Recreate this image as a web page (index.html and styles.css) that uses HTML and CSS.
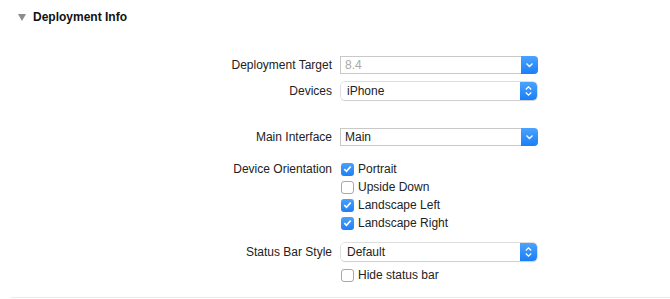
FILE: index.html
```html
<!DOCTYPE html>
<html lang="en">
<head>
  <meta charset="UTF-8" />
  <title>Deployment Info</title>
  <link rel="stylesheet" href="styles.css">
</head>
<body>
  <div class="section">
    <div class="section-head">
      <span class="disclosure"></span>
      <span class="section-title">Deployment Info</span>
    </div>

    <div class="form">
      <div class="row">
        <div class="label">Deployment Target</div>
        <div class="combo">
          <div class="combo-field disabled">8.4</div>
          <div class="combo-btn">
            <svg width="9" height="6" viewBox="0 0 9 6"><path d="M1.5 1.5 L4.5 4.5 L7.5 1.5" fill="none" stroke="#fff" stroke-width="1.4"/></svg>
          </div>
        </div>
      </div>

      <div class="row">
        <div class="label">Devices</div>
        <div class="popup">
          <div class="popup-field">iPhone</div>
          <div class="popup-btn">
            <svg width="9" height="12" viewBox="0 0 9 12"><path d="M1.8 4.5 L4.5 1.8 L7.2 4.5 M1.8 7.5 L4.5 10.2 L7.2 7.5" fill="none" stroke="#fff" stroke-width="1.3"/></svg>
          </div>
        </div>
      </div>

      <div class="row gap-lg">
        <div class="label">Main Interface</div>
        <div class="combo">
          <div class="combo-field">Main</div>
          <div class="combo-btn">
            <svg width="9" height="6" viewBox="0 0 9 6"><path d="M1.5 1.5 L4.5 4.5 L7.5 1.5" fill="none" stroke="#fff" stroke-width="1.4"/></svg>
          </div>
        </div>
      </div>

      <div class="group gap-md">
        <div class="label check-label">Device Orientation</div>
        <div class="checks">
          <label class="check"><span class="box on"><svg width="9" height="8" viewBox="0 0 9 8"><path d="M1.3 4.2 L3.5 6.3 L7.7 1.5" fill="none" stroke="#fff" stroke-width="1.7"/></svg></span>Portrait</label>
          <label class="check"><span class="box"></span>Upside Down</label>
          <label class="check"><span class="box on"><svg width="9" height="8" viewBox="0 0 9 8"><path d="M1.3 4.2 L3.5 6.3 L7.7 1.5" fill="none" stroke="#fff" stroke-width="1.7"/></svg></span>Landscape Left</label>
          <label class="check"><span class="box on"><svg width="9" height="8" viewBox="0 0 9 8"><path d="M1.3 4.2 L3.5 6.3 L7.7 1.5" fill="none" stroke="#fff" stroke-width="1.7"/></svg></span>Landscape Right</label>
        </div>
      </div>

      <div class="row gap-sm">
        <div class="label">Status Bar Style</div>
        <div class="popup">
          <div class="popup-field">Default</div>
          <div class="popup-btn">
            <svg width="9" height="12" viewBox="0 0 9 12"><path d="M1.8 4.5 L4.5 1.8 L7.2 4.5 M1.8 7.5 L4.5 10.2 L7.2 7.5" fill="none" stroke="#fff" stroke-width="1.3"/></svg>
          </div>
        </div>
      </div>

      <div class="group gap-xs">
        <div class="label"></div>
        <div class="checks">
          <label class="check"><span class="box"></span>Hide status bar</label>
        </div>
      </div>
    </div>
  </div>
</body>
</html>
```

FILE: styles.css
```css
body {
  margin: 0;
  background: #fff;
  color: #222;
  font-family: "Liberation Sans", Arial, sans-serif;
  font-size: 12px;
}
.section {
  margin-left: 10px;
  height: 298px;
  border-bottom: 1px solid #ececec;
  box-sizing: border-box;
}
.section-head {
  height: 34px;
  display: flex;
  align-items: center;
  padding-left: 8px;
}
.disclosure {
  width: 0;
  height: 0;
  border-left: 4.5px solid transparent;
  border-right: 4.5px solid transparent;
  border-top: 7px solid #8c8c8c;
  margin-right: 7px;
  margin-top: 1px;
}
.section-title {
  font-weight: bold;
  color: #111;
}
.form {
  margin-top: 22px;
  display: flex;
  flex-direction: column;
}
.row, .group {
  display: flex;
  gap: 8px;
}
.row {
  height: 18px;
  align-items: center;
}
.row + .row {
  margin-top: 8px;
}
.gap-lg { margin-top: 28px !important; }
.gap-md { margin-top: 14px; }
.gap-sm { margin-top: 11px !important; }
.gap-xs { margin-top: 5px; }
.label {
  width: 322px;
  text-align: right;
  flex: none;
}
.check-label {
  line-height: 18px;
}

/* combo box */
.combo {
  width: 198px;
  height: 18px;
  display: flex;
}
.combo-field {
  flex: 1;
  border: 1px solid #c9c9c9;
  border-right: none;
  padding-left: 4px;
  line-height: 16px;
  background: #fff;
}
.combo-field.disabled {
  color: #a9a9a9;
}
.combo-btn, .popup-btn {
  width: 17px;
  display: flex;
  align-items: center;
  justify-content: center;
  background: linear-gradient(#4aa3fd, #1a7ef6);
  border-radius: 0 4px 4px 0;
}

/* popup button */
.popup {
  width: 196px;
  margin-left: 1px;
  height: 18px;
  display: flex;
  border-radius: 4px;
  box-shadow: 0 0 0 0.5px #bdbdbd, 0 1px 1px rgba(0,0,0,0.12);
  overflow: hidden;
}
.popup-field {
  flex: 1;
  padding-left: 6px;
  line-height: 18px;
  background: #fff;
}

/* checkboxes */
.checks {
  display: flex;
  flex-direction: column;
}
.check {
  height: 18px;
  display: flex;
  align-items: center;
  gap: 4px;
}
.box {
  width: 13px;
  height: 13px;
  margin-left: 1px;
  box-sizing: border-box;
  border: 1px solid #a8a8a8;
  border-radius: 3px;
  background: #fff;
  display: flex;
  align-items: center;
  justify-content: center;
}
.box.on {
  border: none;
  background: linear-gradient(#49a1fc, #1f80f6);
}
```
